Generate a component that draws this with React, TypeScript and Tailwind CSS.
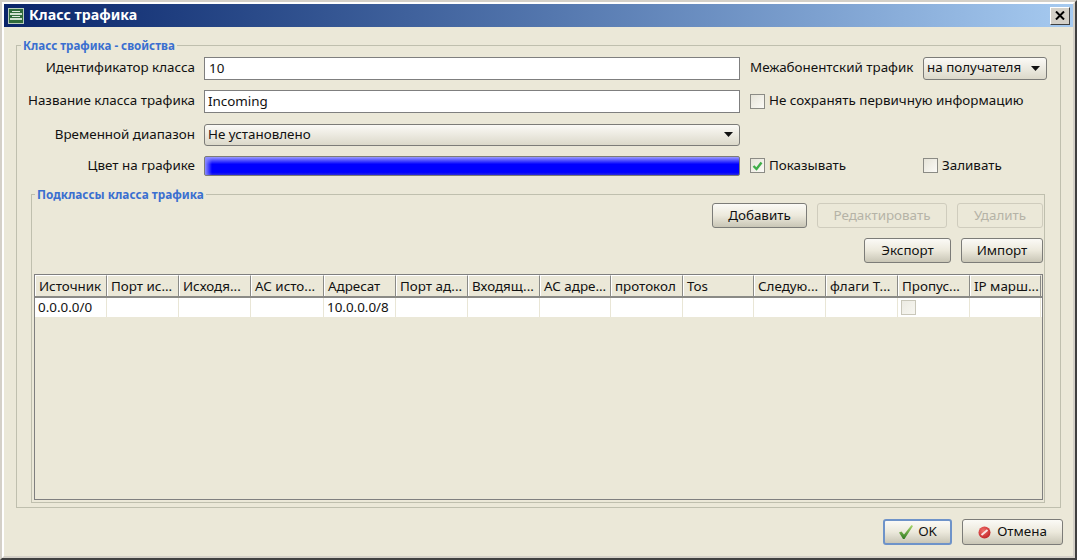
import React from "react";

const headers = [
  ["Источник", "w-[72px]"],
  ["Порт ис...", "w-[72px]"],
  ["Исходя...", "w-[72px]"],
  ["АС исто...", "w-[73px]"],
  ["Адресат", "w-[72px]"],
  ["Порт ад...", "w-[72px]"],
  ["Входящ...", "w-[72px]"],
  ["АС адре...", "w-[71px]"],
  ["протокол", "w-[72px]"],
  ["Tos", "w-[71px]"],
  ["Следую...", "w-[72px]"],
  ["флаги Т...", "w-[72px]"],
  ["Пропус...", "w-[72px]"],
  ["IP марш...", "w-[71px]"],
];

const cells = ["0.0.0.0/0", "", "", "", "10.0.0.0/8", "", "", "", "", "", "", "", "", ""];

function Checkbox({ checked = false, disabled = false }: { checked?: boolean; disabled?: boolean }) {
  return (
    <span
      className={`flex h-[15px] w-[15px] shrink-0 items-center justify-center border bg-gradient-to-br ${
        disabled ? "border-[#c9c7ba] from-[#ecebe3] to-[#f7f6f0]" : "border-[#8b8b85] from-[#e6e4d8] to-[#fbfaf6]"
      }`}
    >
      {checked && (
        <svg width="11" height="10" viewBox="0 0 11 10">
          <path d="M1.5 5 L4.5 8 L9.5 1.5" fill="none" stroke="#3fae49" strokeWidth="2.4" />
        </svg>
      )}
    </span>
  );
}

function Button({ children, disabled = false, className = "" }: { children: React.ReactNode; disabled?: boolean; className?: string }) {
  return (
    <button
      className={`flex h-[25px] items-center justify-center rounded-[3px] border ${
        disabled
          ? "border-[#cfccbd] text-[#b5b3a7]"
          : "border-[#7c7c78] bg-gradient-to-b from-[#fbfaf6] via-[#ece9dc] to-[#c9c6b6] text-[#111]"
      } ${className}`}
    >
      {children}
    </button>
  );
}

function Arrow() {
  return (
    <svg width="9" height="5" viewBox="0 0 9 5" className="shrink-0">
      <path d="M0 0 H9 L4.5 5 Z" fill="#111" />
    </svg>
  );
}

export default function App() {
  return (
    <div className="h-[560px] w-[1077px] overflow-hidden border-2 border-t-[#d4d0c8] border-l-[#d4d0c8] border-r-[#404040] border-b-[#404040]">
      <div className="flex h-full flex-col border-2 border-t-white border-l-white border-r-[#d4d0c8] border-b-[#d4d0c8] bg-[#ebe8d8] font-['Noto_Sans',sans-serif] text-[13.4px] leading-none text-[#111]">
        {/* Title bar */}
        <div className="flex h-[23px] shrink-0 items-center bg-gradient-to-r from-[#0a246a] to-[#a6caf0] pr-[3px] pl-[4px]">
          <svg width="16" height="16" viewBox="0 0 16 16" className="shrink-0">
            <rect x="0.5" y="0.5" width="15" height="15" fill="#2f6b3a" stroke="#b9cdbb" />
            <rect x="4" y="3" width="8" height="1" fill="#dfeadf" />
            <rect x="2" y="5" width="12" height="2" fill="#cfe0cf" />
            <rect x="4" y="8" width="8" height="1" fill="#dfeadf" />
            <rect x="2" y="10" width="12" height="2" fill="#cfe0cf" />
          </svg>
          <span className="ml-[5px] text-[14.2px] font-bold text-white">Класс трафика</span>
          <button className="ml-auto flex h-[18px] w-[20px] items-center justify-center border border-t-white border-l-white border-r-[#404040] border-b-[#404040] bg-[#d4d0c8]">
            <svg width="10" height="9" viewBox="0 0 10 9">
              <path d="M1 0.5 L9 8.5 M9 0.5 L1 8.5" stroke="#000" strokeWidth="2" />
            </svg>
          </button>
        </div>

        {/* Main properties */}
        <fieldset className="mx-[12px] mt-[13px] h-[468px] shrink-0 border border-[#bfbfae] px-0 pt-0">
          <legend className="ml-[4px] px-[2px] text-[11.6px] font-bold text-[#3a6fd0]">Класс трафика - свойства</legend>

          <div className="mt-[5px] flex items-center">
            <label className="w-[178px] text-right">Идентификатор класса</label>
            <input readOnly value="10" className="ml-[9px] h-[23px] w-[536px] border border-[#7f7f7f] bg-white px-[4px] outline-none" />
            <span className="ml-[10px] w-[173px]">Межабонентский трафик</span>
            <div className="flex h-[23px] w-[124px] items-center justify-between rounded-[3px] border border-[#7c7c78] bg-gradient-to-b from-[#fbfaf6] to-[#dcd9ca] pr-[6px] pl-[3px]">
              <span>на получателя</span>
              <Arrow />
            </div>
          </div>

          <div className="mt-[10px] flex items-center">
            <label className="w-[178px] text-right">Название класса трафика</label>
            <input readOnly value="Incoming" className="ml-[9px] h-[23px] w-[536px] border border-[#7f7f7f] bg-white px-[3px] outline-none" />
            <span className="ml-[10px] flex items-center gap-[4px]">
              <Checkbox />
              Не сохранять первичную информацию
            </span>
          </div>

          <div className="mt-[11px] flex items-center">
            <label className="w-[178px] text-right">Временной диапазон</label>
            <div className="ml-[9px] flex h-[22px] w-[536px] items-center justify-between rounded-[3px] border border-[#7c7c78] bg-gradient-to-b from-[#fbfaf6] to-[#dcd9ca] pr-[6px] pl-[3px]">
              <span>Не установлено</span>
              <Arrow />
            </div>
          </div>

          <div className="mt-[10px] flex items-center">
            <label className="w-[178px] text-right">Цвет на графике</label>
            <div className="ml-[9px] h-[20px] w-[536px] rounded-[2px] border border-[#7c7c78] bg-[linear-gradient(90deg,#8c8cff_0px,#8c8cff00_7px),linear-gradient(180deg,#9a9aff_0%,#0000ff_40%,#0000ff_85%,#2a2ae0_100%)]" />
            <span className="ml-[10px] flex w-[173px] items-center gap-[4px]">
              <Checkbox checked />
              Показывать
            </span>
            <span className="flex items-center gap-[4px]">
              <Checkbox />
              Заливать
            </span>
          </div>

          {/* Subclasses */}
          <fieldset className="mr-[15px] ml-[14px] mt-[13px] h-[314px] border border-[#bfbfae] px-0 pt-0">
            <legend className="ml-[3px] px-[2px] text-[11.8px] font-bold text-[#3a6fd0]">Подклассы класса трафика</legend>

            <div className="mt-[3px] flex justify-end gap-[10px] pr-[1px]">
              <Button className="w-[95px]">Добавить</Button>
              <Button disabled className="w-[130px]">Редактировать</Button>
              <Button disabled className="w-[86px]">Удалить</Button>
            </div>
            <div className="mt-[10px] flex justify-end gap-[10px] pr-[1px]">
              <Button className="w-[87px]">Экспорт</Button>
              <Button className="w-[82px]">Импорт</Button>
            </div>

            {/* Table */}
            <div className="mr-[1px] ml-[2px] mt-[11px] h-[226px] border border-[#7f7f7f]">
              <div className="flex h-[23px] border-b-2 border-[#8a8a86]">
                {headers.map(([h, w]) => (
                  <div key={h} className={`${w} flex items-center border-r border-l border-t border-r-[#8a8a86] border-l-white border-t-white px-[3px] whitespace-nowrap`}>
                    {h}
                  </div>
                ))}
              </div>
              <div className="flex h-[19px] bg-white">
                {cells.map((c, i) => (
                  <div key={i} className={`${headers[i][1]} flex items-center border-r border-[#e9e6d6] px-[3px] whitespace-nowrap`}>
                    {i === 12 ? <Checkbox disabled /> : c}
                  </div>
                ))}
              </div>
            </div>
          </fieldset>
        </fieldset>

        {/* Footer */}
        <div className="mt-[11px] flex justify-end gap-[10px] pr-[10px]">
          <button className="flex h-[26px] w-[69px] items-center justify-center gap-[4px] rounded-[3px] border-2 border-[#6e93c9] bg-gradient-to-b from-[#fbfaf6] via-[#ece9dc] to-[#c9c6b6]">
            <svg width="16" height="16" viewBox="0 0 16 16">
              <defs>
                <linearGradient id="okGrad" x1="0" y1="0" x2="0" y2="1">
                  <stop offset="0" stopColor="#a8d86a" />
                  <stop offset="1" stopColor="#2f7a22" />
                </linearGradient>
              </defs>
              <path d="M1 8.5 L3.5 7.5 L6 10.5 L13.5 1 L15 2 L6.5 15 L5 15 Z" fill="url(#okGrad)" />
            </svg>
            OK
          </button>
          <button className="flex h-[26px] w-[101px] items-center justify-center gap-[6px] rounded-[3px] border border-[#7c7c78] bg-gradient-to-b from-[#fbfaf6] via-[#ece9dc] to-[#c9c6b6]">
            <svg width="13" height="13" viewBox="0 0 13 13">
              <defs>
                <radialGradient id="noGrad" cx="0.4" cy="0.35" r="0.75">
                  <stop offset="0" stopColor="#f2706a" />
                  <stop offset="1" stopColor="#bb1c22" />
                </radialGradient>
              </defs>
              <circle cx="6.5" cy="6.5" r="6" fill="url(#noGrad)" />
              <path d="M3.5 9 L9.5 4" stroke="#f8e4e4" strokeWidth="2" />
            </svg>
            Отмена
          </button>
        </div>
      </div>
    </div>
  );
}
